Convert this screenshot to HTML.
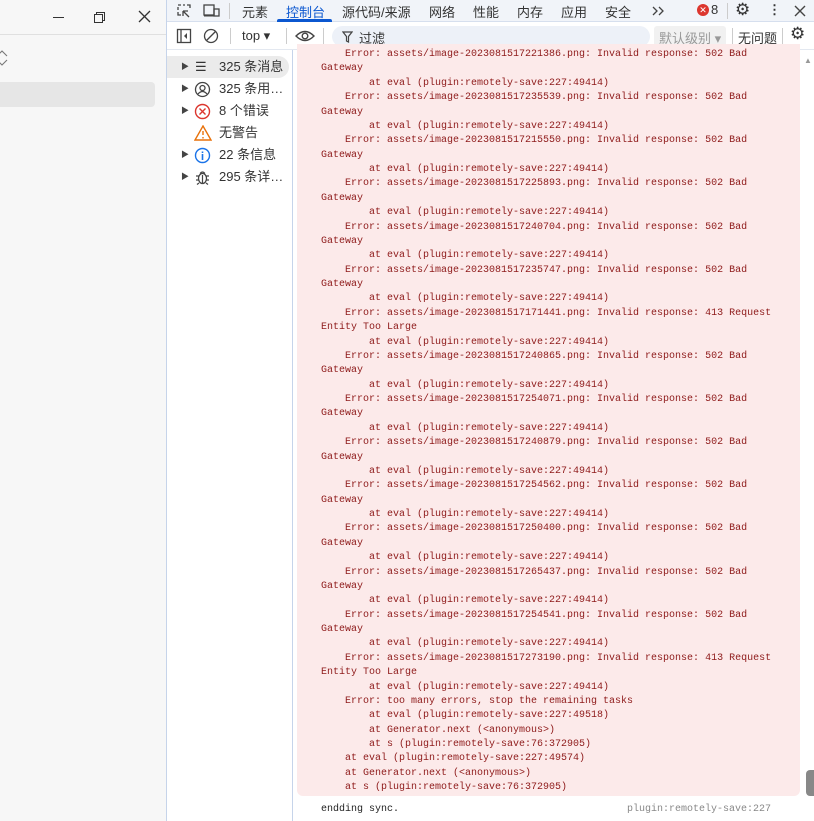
<!DOCTYPE html>
<html><head><meta charset="utf-8"><style>
*{margin:0;padding:0;box-sizing:border-box}
body{width:814px;height:821px;overflow:hidden;background:#fff;font-family:"Liberation Sans","Noto Sans CJK SC",sans-serif;position:relative}
.left{position:absolute;left:0;top:0;width:166px;height:821px;background:#f7f7f7}
.left .bar{height:35px;border-bottom:1px solid #e0e0e0;position:relative}
.dv{position:absolute;left:166px;top:0;width:648px;height:821px;border-left:1px solid #c6d4ea}
.t1{position:absolute;left:0;top:0;width:648px;height:22px;background:#f1f4f9;border-bottom:1px solid #d6dfee;font-size:13px;color:#333}
.t1 span{position:absolute;top:2px}
.t2{position:absolute;left:0;top:23px;width:648px;height:27px;background:#fff;border-bottom:1px solid #e3e8f0;font-size:13px;color:#333}
.side{position:absolute;left:0;top:50px;width:126px;height:771px;border-right:1px solid #c6d4ea;font-size:13px;color:#333}
.side div{position:absolute;left:0;height:22px;width:122px;line-height:22px}
.side .arr{position:absolute;left:14px;font-size:8px;color:#444}
.side .lab{position:absolute;left:52px}
.pink{position:absolute;left:297px;top:44px;width:503px;height:752px;background:#fceaea;border-radius:0 0 6px 6px}
pre{position:absolute;left:155px;top:48px;font-family:"Liberation Mono",monospace;font-size:10px;line-height:14.38px;color:#8e1a1a;white-space:pre}
</style></head><body>
<div class="left"><div class="bar">
<div style="position:absolute;left:53px;top:17px;width:11px;height:1px;background:#333"></div>
<div style="position:absolute;left:96px;top:12px;width:9px;height:9px;border:1px solid #333"></div>
<div style="position:absolute;left:94px;top:14px;width:9px;height:9px;border:1px solid #333;background:#f7f7f7"></div>
<svg style="position:absolute;left:138px;top:10px" width="13" height="13"><path d="M1 1l11 11M12 1L1 12" stroke="#333" stroke-width="1.3"/></svg>
</div>
<svg style="position:absolute;left:-4px;top:50px" width="12" height="16"><path d="M1 6l5-5 5 5M1 10l5 5 5-5" fill="none" stroke="#777" stroke-width="1.1"/></svg>
<div style="position:absolute;left:0;top:82px;width:155px;height:25px;background:#e6e6e6;border-radius:0 4px 4px 0"></div>
</div>
<div class="dv">
<div class="t1">
<svg style="position:absolute;left:9px;top:3px" width="16" height="16"><path d="M2 2h3M7 2h2M11 2h3v3M2 4v3M2 9v3h3M7 8l6 6M7 8h5M7 8v5" stroke="#444" fill="none" stroke-width="1.3"/></svg>
<svg style="position:absolute;left:36px;top:3px" width="18" height="16"><rect x="1" y="2" width="10" height="10" fill="none" stroke="#444" stroke-width="1.3"/><rect x="11" y="6" width="5" height="7" fill="none" stroke="#444" stroke-width="1.3"/><path d="M1 13h10" stroke="#444"/></svg>
<div style="position:absolute;left:62px;top:3px;width:1px;height:16px;background:#ccc"></div>
<span style="left:75px">元素</span>
<span style="left:119px;color:#0b57d0">控制台</span>
<div style="position:absolute;left:110px;top:19px;width:55px;height:3px;background:#0b57d0;border-radius:2px 2px 0 0"></div>
<span style="left:175px">源代码/来源</span>
<span style="left:262px">网络</span>
<span style="left:306px">性能</span>
<span style="left:350px">内存</span>
<span style="left:394px">应用</span>
<span style="left:438px">安全</span>
<svg style="position:absolute;left:485px;top:6px" width="14" height="10"><path d="M1 1l4 4-4 4M7 1l4 4-4 4" fill="none" stroke="#444" stroke-width="1.3"/></svg>
<div style="position:absolute;left:530px;top:4px;width:12px;height:12px;border-radius:50%;background:#dc362e;color:#fff;font-size:9px;line-height:12px;text-align:center">✕</div>
<span style="left:544px">8</span>
<div style="position:absolute;left:560px;top:3px;width:1px;height:16px;background:#ccc"></div>
<span style="left:568px;top:0;font-size:17px">⚙</span>
<span style="left:601px;font-weight:bold">⋮</span>
<svg style="position:absolute;left:627px;top:5px" width="12" height="12"><path d="M1 1l10 10M11 1L1 11" stroke="#444" stroke-width="1.4"/></svg>
</div>
<div class="t2">
<svg style="position:absolute;left:9px;top:5px" width="16" height="16"><rect x="1.5" y="1.5" width="13" height="13" fill="none" stroke="#444" stroke-width="1.3"/><path d="M5 1.5v13" stroke="#444" stroke-width="1.3"/><path d="M11 5l-3 3 3 3z" fill="#444"/></svg>
<svg style="position:absolute;left:36px;top:5px" width="16" height="16"><circle cx="8" cy="8" r="6.5" fill="none" stroke="#444" stroke-width="1.3"/><path d="M3.5 12.5l9-9" stroke="#444" stroke-width="1.3"/></svg>
<div style="position:absolute;left:63px;top:5px;width:1px;height:16px;background:#ccc"></div>
<span style="position:absolute;left:75px;top:5px">top ▾</span>
<div style="position:absolute;left:119px;top:5px;width:1px;height:16px;background:#ccc"></div>
<svg style="position:absolute;left:128px;top:6px" width="20" height="14"><path d="M1 7Q10-2 19 7Q10 16 1 7z" fill="none" stroke="#444" stroke-width="1.4"/><circle cx="10" cy="7" r="2.8" fill="none" stroke="#444" stroke-width="1.4"/></svg>
<div style="position:absolute;left:156px;top:5px;width:1px;height:16px;background:#ccc"></div>
<div style="position:absolute;left:165px;top:3px;width:318px;height:21px;background:#edf1f8;border-radius:11px"></div>
<svg style="position:absolute;left:175px;top:8px" width="11" height="12"><path d="M1 1h9L6.5 5.5V11L4.5 10V5.5z" fill="none" stroke="#444" stroke-width="1.2"/></svg>
<span style="position:absolute;left:192px;top:5px">过滤</span>
<div style="position:absolute;left:487px;top:3px;width:72px;height:21px;background:#f1f1f1;border-radius:3px;color:#999;padding:2px 0 0 5px">默认级别 ▾</div>
<div style="position:absolute;left:565px;top:5px;width:1px;height:16px;background:#ccc"></div>
<span style="position:absolute;left:571px;top:5px">无问题</span>
<div style="position:absolute;left:615px;top:5px;width:1px;height:16px;background:#ccc"></div>
<span style="position:absolute;left:623px;top:1px;font-size:17px">⚙</span>
</div>
<div class="side">
<div style="top:6px;background:#ebebeb;border-radius:0 11px 11px 0"><span class="arr">▶</span><span style="position:absolute;left:28px">☰</span><span class="lab">325 条消息</span></div>
<div style="top:28px"><span class="arr">▶</span><svg style="position:absolute;left:27px;top:3px" width="17" height="17"><circle cx="8.5" cy="8.5" r="7" fill="none" stroke="#444" stroke-width="1.3"/><circle cx="8.5" cy="7" r="2.5" fill="none" stroke="#444" stroke-width="1.3"/><path d="M4 13q4.5-5 9 0" fill="none" stroke="#444" stroke-width="1.3"/></svg><span class="lab">325 条用…</span></div>
<div style="top:50px"><span class="arr">▶</span><svg style="position:absolute;left:27px;top:3px" width="17" height="17"><circle cx="8.5" cy="8.5" r="7" fill="none" stroke="#dc362e" stroke-width="1.4"/><path d="M5.5 5.5l6 6M11.5 5.5l-6 6" stroke="#dc362e" stroke-width="1.4"/></svg><span class="lab">8 个错误</span></div>
<div style="top:72px"><svg style="position:absolute;left:27px;top:3px" width="18" height="16"><path d="M9 1L17 15H1z" fill="none" stroke="#e8710a" stroke-width="1.4"/><path d="M9 6v4M9 12v1.5" stroke="#e8710a" stroke-width="1.4"/></svg><span class="lab">无警告</span></div>
<div style="top:94px"><span class="arr">▶</span><svg style="position:absolute;left:27px;top:3px" width="17" height="17"><circle cx="8.5" cy="8.5" r="7" fill="none" stroke="#1a73e8" stroke-width="1.4"/><path d="M8.5 7v6M8.5 4.5v1.5" stroke="#1a73e8" stroke-width="1.6"/></svg><span class="lab">22 条信息</span></div>
<div style="top:116px"><span class="arr">▶</span><svg style="position:absolute;left:28px;top:3px" width="15" height="16"><ellipse cx="7.5" cy="9.5" rx="4" ry="5" fill="none" stroke="#444" stroke-width="1.3"/><path d="M5 4.5q2.5-3 5 0M1 7h3M11 7h3M1 11h3M11 11h3M7.5 6v8M4 14l-2 1.5M11 14l2 1.5" fill="none" stroke="#444" stroke-width="1.2"/></svg><span class="lab">295 条详…</span></div>
</div>
</div>
<div class="pink"></div>
<pre style="left:321px">    Error: assets/image-2023081517221386.png: Invalid response: 502 Bad
Gateway
        at eval (plugin:remotely-save:227:49414)
    Error: assets/image-2023081517235539.png: Invalid response: 502 Bad
Gateway
        at eval (plugin:remotely-save:227:49414)
    Error: assets/image-2023081517215550.png: Invalid response: 502 Bad
Gateway
        at eval (plugin:remotely-save:227:49414)
    Error: assets/image-2023081517225893.png: Invalid response: 502 Bad
Gateway
        at eval (plugin:remotely-save:227:49414)
    Error: assets/image-2023081517240704.png: Invalid response: 502 Bad
Gateway
        at eval (plugin:remotely-save:227:49414)
    Error: assets/image-2023081517235747.png: Invalid response: 502 Bad
Gateway
        at eval (plugin:remotely-save:227:49414)
    Error: assets/image-2023081517171441.png: Invalid response: 413 Request
Entity Too Large
        at eval (plugin:remotely-save:227:49414)
    Error: assets/image-2023081517240865.png: Invalid response: 502 Bad
Gateway
        at eval (plugin:remotely-save:227:49414)
    Error: assets/image-2023081517254071.png: Invalid response: 502 Bad
Gateway
        at eval (plugin:remotely-save:227:49414)
    Error: assets/image-2023081517240879.png: Invalid response: 502 Bad
Gateway
        at eval (plugin:remotely-save:227:49414)
    Error: assets/image-2023081517254562.png: Invalid response: 502 Bad
Gateway
        at eval (plugin:remotely-save:227:49414)
    Error: assets/image-2023081517250400.png: Invalid response: 502 Bad
Gateway
        at eval (plugin:remotely-save:227:49414)
    Error: assets/image-2023081517265437.png: Invalid response: 502 Bad
Gateway
        at eval (plugin:remotely-save:227:49414)
    Error: assets/image-2023081517254541.png: Invalid response: 502 Bad
Gateway
        at eval (plugin:remotely-save:227:49414)
    Error: assets/image-2023081517273190.png: Invalid response: 413 Request
Entity Too Large
        at eval (plugin:remotely-save:227:49414)
    Error: too many errors, stop the remaining tasks
        at eval (plugin:remotely-save:227:49518)
        at Generator.next (&lt;anonymous&gt;)
        at s (plugin:remotely-save:76:372905)
    at eval (plugin:remotely-save:227:49574)
    at Generator.next (&lt;anonymous&gt;)
    at s (plugin:remotely-save:76:372905)</pre>
<pre style="left:321px;top:803px;color:#222">endding sync.</pre>
<pre style="left:627px;top:803px;color:#888">plugin:remotely-save:227</pre>
<div style="position:absolute;left:800px;top:50px;width:14px;height:771px;background:#fff"></div>
<div style="position:absolute;left:804px;top:56px;font-size:8px;color:#999">▲</div>
<div style="position:absolute;left:806px;top:770px;width:8px;height:26px;background:#888;border-radius:4px 0 0 4px"></div>
</body></html>
